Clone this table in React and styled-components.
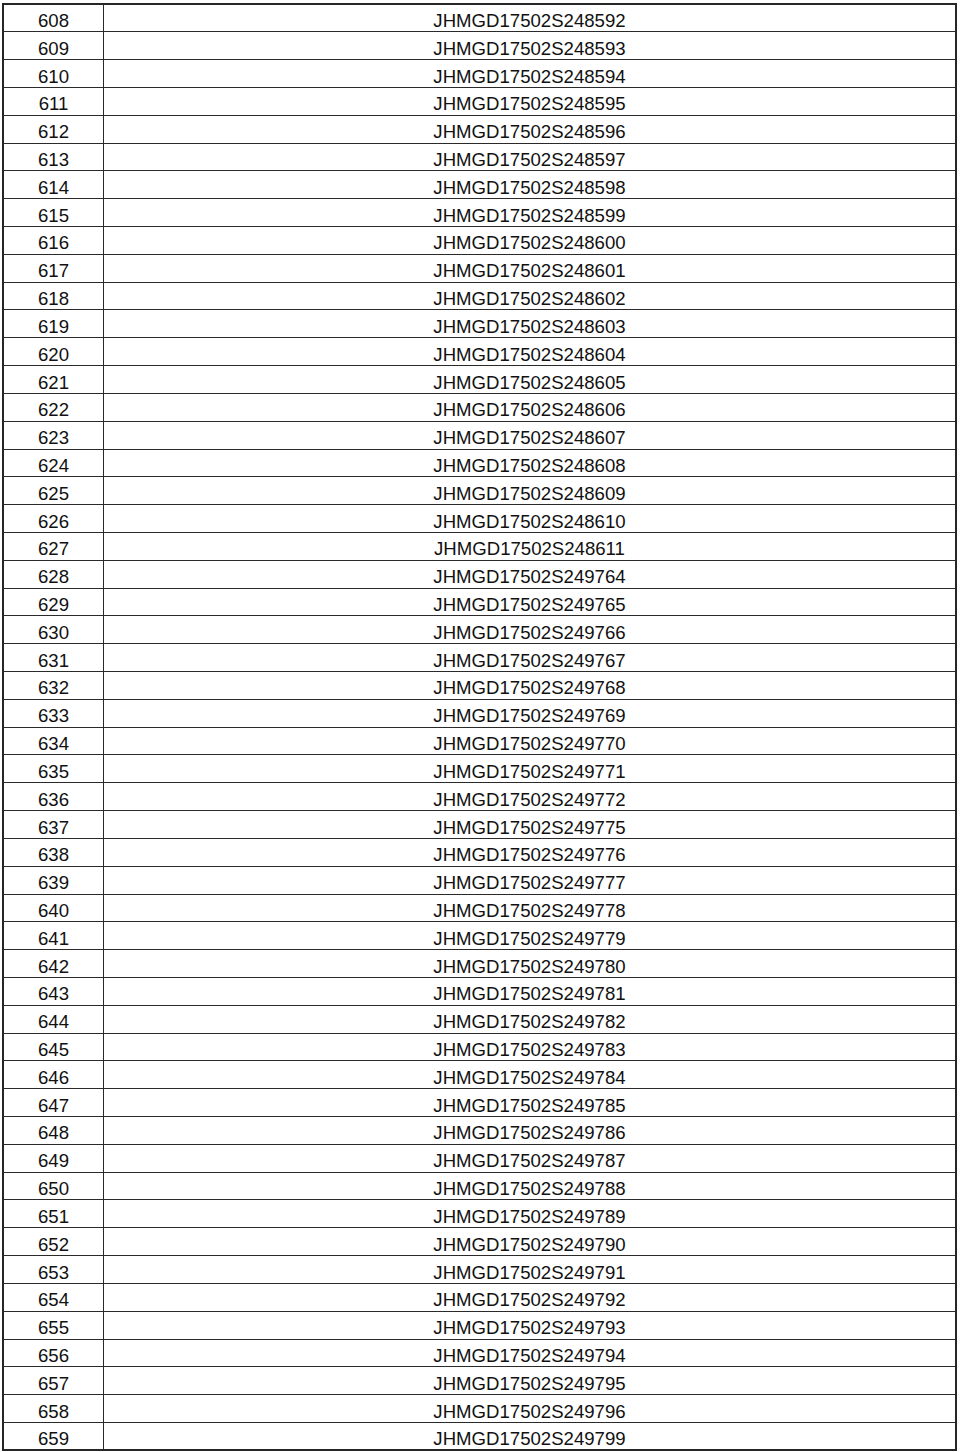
import React from 'react';
import styled, { createGlobalStyle } from 'styled-components';

const GlobalStyle = createGlobalStyle`
  html, body {
    margin: 0;
    padding: 0;
    background: #ffffff;
  }
  body {
    font-family: "Liberation Sans", Arial, sans-serif;
    color: #111111;
  }
`;

const Page = styled.div`
  padding: 3px 3px 0 2px;
`;

const Table = styled.table`
  width: 955px;
  border-collapse: collapse;
  border: 2px solid #262626;
  table-layout: fixed;
`;

const Row = styled.tr`
  height: 27.82px;
`;

const Cell = styled.td`
  border: 1px solid #2a2a2a;
  padding: 0;
  text-align: center;
  vertical-align: bottom;
  font-size: 18.6px;
  line-height: 1.15;
  width: ${(p) => (p.$narrow ? '99px' : 'auto')};
`;

const buildRows = () => {
  const rows = [];
  for (let n = 608; n <= 659; n++) {
    let code;
    if (n <= 627) code = 248592 + (n - 608);
    else if (n <= 636) code = 249764 + (n - 628);
    else if (n <= 658) code = 249775 + (n - 637);
    else code = 249799;
    rows.push({ n, id: `JHMGD17502S${code}` });
  }
  return rows;
};

const rows = buildRows();

const App = () => (
  <>
    <GlobalStyle />
    <Page>
      <Table>
        <tbody>
          {rows.map((r) => (
            <Row key={r.n}>
              <Cell $narrow>{r.n}</Cell>
              <Cell>{r.id}</Cell>
            </Row>
          ))}
        </tbody>
      </Table>
    </Page>
  </>
);

export default App;
